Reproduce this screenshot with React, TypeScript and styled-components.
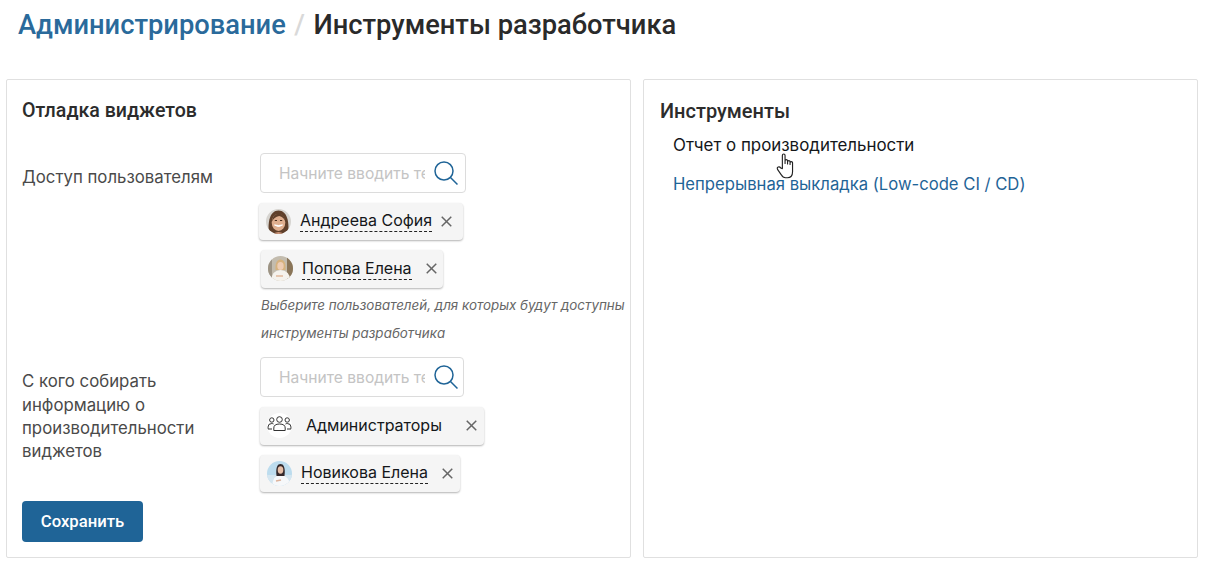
import styled, { createGlobalStyle } from "styled-components";

const GlobalStyle = createGlobalStyle`
  html, body {
    margin: 0;
    padding: 0;
    background: #fff;
    font-family: Inter, "Liberation Sans", sans-serif;
    color: #1d1d1f;
  }
`;

const Page = styled.div`
  width: 1205px;
  height: 565px;
  box-sizing: border-box;
  padding: 10px 7px 0 6px;
  overflow: hidden;
`;

const Breadcrumbs = styled.h1`
  margin: 0 0 0 12px;
  height: 69px;
  font: 500 27.3px/31px Roboto, sans-serif;
  color: #2a2a2a;
  display: flex;
  gap: 8.5px;
`;

const Crumb = styled.span`
  color: #2a6a9b;
`;

const Slash = styled.span`
  color: #d9d9d9;
`;

const Columns = styled.div`
  display: grid;
  grid-template-columns: 625px 555px;
  gap: 12px;
`;

const Panel = styled.section`
  position: relative;
  height: 479px;
  box-sizing: border-box;
  border: 1px solid #e0e0e0;
  border-radius: 2px;
  padding: 20px 16px 0 ${(p) => p.$left}px;
`;

const PanelTitle = styled.h2`
  margin: 0;
  font: 500 ${(p) => p.$size}px/22px Roboto, sans-serif;
  color: #2c2c2c;
`;

const FormRow = styled.div`
  display: grid;
  grid-template-columns: 238px 1fr;
  margin-top: ${(p) => p.$top}px;
`;

const Label = styled.div`
  font-size: 16.8px;
  line-height: 23.3px;
  color: #4a4a4a;
  padding-top: ${(p) => p.$pad}px;
`;

const Field = styled.div`
  display: flex;
  flex-direction: column;
  align-items: flex-start;
`;

const SearchBox = styled.div`
  width: ${(p) => p.$width}px;
  height: 40px;
  box-sizing: border-box;
  border: 1px solid #dcdcdc;
  border-radius: 4px;
  display: flex;
  align-items: center;
  padding: 0 6px 0 18px;
  margin-bottom: 10px;
`;

const SearchInput = styled.input`
  width: 146px;
  padding: 1px 0 0;
  border: 0;
  outline: 0;
  background: none;
  font-family: Inter, sans-serif;
  font-size: 15.6px;

  &::placeholder {
    color: #c4c4c4;
    opacity: 1;
  }
`;

const SearchIcon = styled.svg`
  width: 26px;
  height: 26px;
  margin-left: 7.5px;
  flex: none;
`;

const Chip = styled.div`
  width: ${(p) => p.$width}px;
  height: 37.5px;
  box-sizing: border-box;
  margin: 0 0 10px ${(p) => p.$shift}px;
  padding: 0 ${(p) => p.$end}px 0 7px;
  border-radius: 4px;
  background: #f5f5f5;
  box-shadow: 0 1px 2px rgba(0, 0, 0, 0.3);
  display: flex;
  align-items: center;
`;

const Avatar = styled.svg`
  width: 25px;
  height: 25px;
  border-radius: 50%;
  flex: none;
`;

const ChipName = styled.span`
  margin-left: ${(p) => p.$gap}px;
  font-size: 16px;
  line-height: 21px;
  color: #14171a;
  white-space: nowrap;
  border-bottom: ${(p) => (p.$link ? "1px dashed #222" : "none")};
`;

const Remove = styled.svg`
  width: 11px;
  height: 11px;
  margin-left: auto;
  flex: none;
`;

const Hint = styled.p`
  margin: -6.5px 0 0 1px;
  width: 380px;
  font-size: 13.37px;
  font-style: italic;
  line-height: 28px;
  color: #666;
  white-space: nowrap;
`;

const SaveButton = styled.button`
  display: block;
  width: 121px;
  height: 41px;
  margin-top: -1px;
  border: 0;
  border-radius: 4px;
  background: #1f6497;
  color: #fff;
  font: 500 16.7px Roboto, sans-serif;
`;

const ToolList = styled.div`
  margin: 12px 0 0 13px;
  display: flex;
  flex-direction: column;
  gap: 16px;
  line-height: 23px;
`;

const Tool = styled.div`
  font-size: 16.9px;
  color: #14171a;
`;

const ToolLink = styled.a`
  font-size: 16.65px;
  color: #1f6497;
`;

const Cursor = styled.svg`
  position: absolute;
  left: 132px;
  top: 73px;
  width: 20px;
  height: 26px;
`;

const Magnifier = () => (
  <SearchIcon viewBox="0 0 26 26" fill="none" stroke="#1f6497" strokeWidth="1.5">
    <circle cx="11" cy="11" r="9" />
    <path d="M17.5 17.5 24.5 24.5" />
  </SearchIcon>
);

const Close = () => (
  <Remove viewBox="0 0 12 12" stroke="#666" strokeWidth="1.6">
    <path d="M.8.8 11.2 11.200M11.200.8.8 11.200" />
  </Remove>
);

const SofiaPhoto = () => (
  <Avatar viewBox="0 0 25 25">
    <rect width="25" height="25" fill="#d6d4d0" />
    <path d="M3 25C1.500 14 3.500 1.500 12.500 1.500S23.500 14 22 25z" fill="#5f3f2a" />
    <ellipse cx="12.500" cy="13.500" rx="6.800" ry="8.500" fill="#dfae8e" />
    <path d="M5.700 13q1-8 7-8.500 6 .5 7 8.500-2-5-6.500-6Q8 8 5.700 13z" fill="#5f3f2a" />
    <path d="M8.500 16q4 3 8 0-4 1-8 0z" fill="#fff" stroke="#fff" />
    <path d="M8.800 11.500h2.200M14 11.500h2.200" stroke="#4a2f1e" strokeWidth="1" />
    <path d="M7 25q5.500-4 11 0z" fill="#c99378" />
  </Avatar>
);

const ElenaPhoto = () => (
  <Avatar viewBox="0 0 25 25">
    <rect width="25" height="25" fill="#c3bcae" />
    <rect x="19" width="6" height="25" fill="#8a7558" />
    <rect width="4" height="25" fill="#9c9384" />
    <path d="M3 25q1-11 9.500-11T23 25z" fill="#f5f2ec" />
    <path d="M7.500 14C7 7 9 3.500 12.500 3.500S18 7 17.500 14z" fill="#d6b27e" />
    <ellipse cx="12.500" cy="10" rx="3.200" ry="4" fill="#eecdb4" />
    <path d="M8 20h7" stroke="#e2b99c" strokeWidth="1.600" />
  </Avatar>
);

const NovikovaPhoto = () => (
  <Avatar viewBox="0 0 25 25">
    <rect width="25" height="25" fill="#bcdcee" />
    <rect y="14" width="25" height="11" fill="#d5e6f0" />
    <path d="M5 25q1-11 8.500-11T24 25z" fill="#f6f8fa" />
    <path d="M9.500 15C8.500 6 10.500 3 13.500 3s5 3 4 12z" fill="#33282a" />
    <ellipse cx="13.500" cy="9" rx="2.800" ry="3.700" fill="#e6bfa8" />
    <path d="M9 20l5-1" stroke="#dcb29c" strokeWidth="1.500" />
  </Avatar>
);

const GroupIcon = () => (
  <Avatar viewBox="0 0 25 25" fill="none" stroke="#333" strokeWidth="1">
    <rect width="25" height="25" fill="#fff" stroke="none" />
    <circle cx="12.500" cy="6.500" r="2.800" />
    <circle cx="4.800" cy="7" r="2.200" />
    <circle cx="20.200" cy="7" r="2.200" />
    <path d="M6.800 17.500v-2.500q0-4 5.700-4t5.700 4v2.500z" />
    <path d="M6.500 11q-.8-.5-1.700-.5-3.800 0-3.800 3.500v2h4M18.500 11q.8-.5 1.700-.5 3.800 0 3.800 3.500v2h-4" />
  </Avatar>
);

const HandCursor = () => (
  <Cursor viewBox="0 0 19 25" fill="#fff" stroke="#222" strokeWidth="1.100" strokeLinejoin="round">
    <path d="M6 15V2.300a1.300 1.300 0 0 1 2.600 0V10V7.500a1.200 1.200 0 0 1 2.400 0V10.500V8.500a1.200 1.200 0 0 1 2.400 0V11V9.500a1.200 1.200 0 0 1 2.400 0V18q0 5.800-5 5.800H9q-2.500 0-4-2.800L1.500 16q-1-2 .5-2.500 1.500-.5 2.500 1z" />
  </Cursor>
);

export default function App() {
  return (
    <>
      <GlobalStyle />
      <Page>
        <Breadcrumbs>
          <Crumb>Администрирование</Crumb>
          <Slash>/</Slash>
          <span>Инструменты разработчика</span>
        </Breadcrumbs>
        <Columns>
          <Panel $left={15}>
            <PanelTitle $size={19.6}>Отладка виджетов</PanelTitle>
            <FormRow $top={30.5}>
              <Label $pad={13.85}>Доступ пользователям</Label>
              <Field>
                <SearchBox $width={206}>
                  <SearchInput placeholder="Начните вводить текст" />
                  <Magnifier />
                </SearchBox>
                <Chip $width={204} $shift={-1} $end={11}>
                  <SofiaPhoto />
                  <ChipName $gap={9} $link>Андреева София</ChipName>
                  <Close />
                </Chip>
                <Chip $width={182} $shift={1} $end={6}>
                  <ElenaPhoto />
                  <ChipName $gap={9} $link>Попова Елена</ChipName>
                  <Close />
                </Chip>
                <Hint>
                  Выберите пользователей, для которых будут доступны
                  <br />
                  инструменты разработчика
                </Hint>
              </Field>
            </FormRow>
            <FormRow $top={10}>
              <Label $pad={13.35}>
                С кого собирать
                <br />
                информацию о
                <br />
                производительности
                <br />
                виджетов
              </Label>
              <Field>
                <SearchBox $width={204}>
                  <SearchInput placeholder="Начните вводить текст" />
                  <Magnifier />
                </SearchBox>
                <Chip $width={224} $shift={0} $end={7}>
                  <GroupIcon />
                  <ChipName $gap={14}>Администраторы</ChipName>
                  <Close />
                </Chip>
                <Chip $width={200} $shift={0} $end={7}>
                  <NovikovaPhoto />
                  <ChipName $gap={9} $link>Новикова Елена</ChipName>
                  <Close />
                </Chip>
              </Field>
            </FormRow>
            <SaveButton>Сохранить</SaveButton>
          </Panel>
          <Panel $left={16}>
            <PanelTitle $size={20}>Инструменты</PanelTitle>
            <ToolList>
              <Tool>Отчет о производительности</Tool>
              <ToolLink>Непрерывная выкладка (Low-code CI / CD)</ToolLink>
            </ToolList>
            <HandCursor />
          </Panel>
        </Columns>
      </Page>
    </>
  );
}
